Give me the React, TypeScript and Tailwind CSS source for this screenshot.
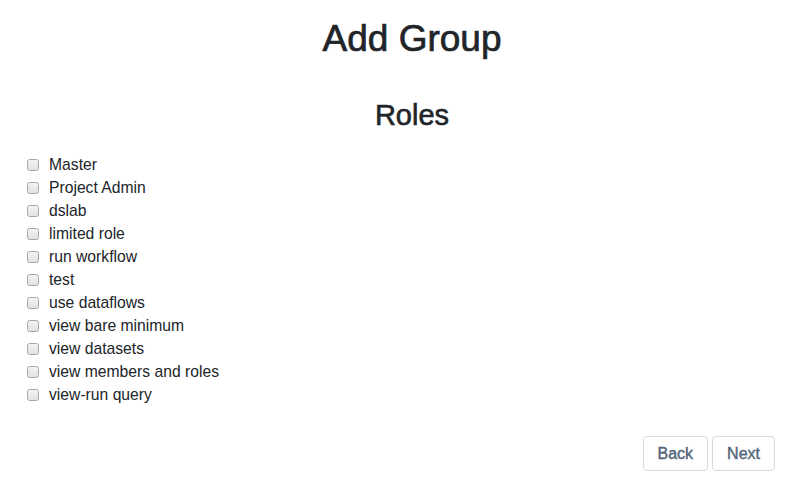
import React from "react";

const roles = [
  "Master",
  "Project Admin",
  "dslab",
  "limited role",
  "run workflow",
  "test",
  "use dataflows",
  "view bare minimum",
  "view datasets",
  "view members and roles",
  "view-run query",
];

function RoleCheck({ label }: { label: string }) {
  return (
    <label className="flex items-center h-[23px] cursor-pointer">
      <span className="ml-[3px] w-[12px] h-[12px] rounded-[2.5px] border border-[#a7a7a7] bg-gradient-to-b from-[#f3f3f3] to-[#e2e2e2] shrink-0" />
      <span className="ml-[10px] text-[15.7px] text-[#212529]">{label}</span>
    </label>
  );
}

export default function App() {
  return (
    <div className="w-full min-h-screen bg-white pl-6 pr-3 pt-[17px] font-['Liberation_Sans',Arial,sans-serif]">
      <h1 className="text-center text-[37px] leading-[1.2] text-[#212529] [-webkit-text-stroke:0.7px]">Add Group</h1>

      <h2 className="mt-[37px] text-center text-[29px] leading-[1.2] text-[#212529] [-webkit-text-stroke:0.6px]">Roles</h2>

      <div className="mt-[20px] flex flex-col">
        {roles.map((r) => (
          <RoleCheck key={r} label={r} />
        ))}
      </div>

      <div className="mt-[30px] flex justify-end gap-[4px] pr-[25px]">
        <button className="h-[35px] px-[14px] rounded-[4px] border border-[#d6dbe0] bg-white text-[16px] text-[#52667a] [-webkit-text-stroke:0.4px]">
          Back
        </button>
        <button className="h-[35px] px-[14px] rounded-[4px] border border-[#d6dbe0] bg-white text-[16px] text-[#52667a] [-webkit-text-stroke:0.4px]">
          Next
        </button>
      </div>
    </div>
  );
}
